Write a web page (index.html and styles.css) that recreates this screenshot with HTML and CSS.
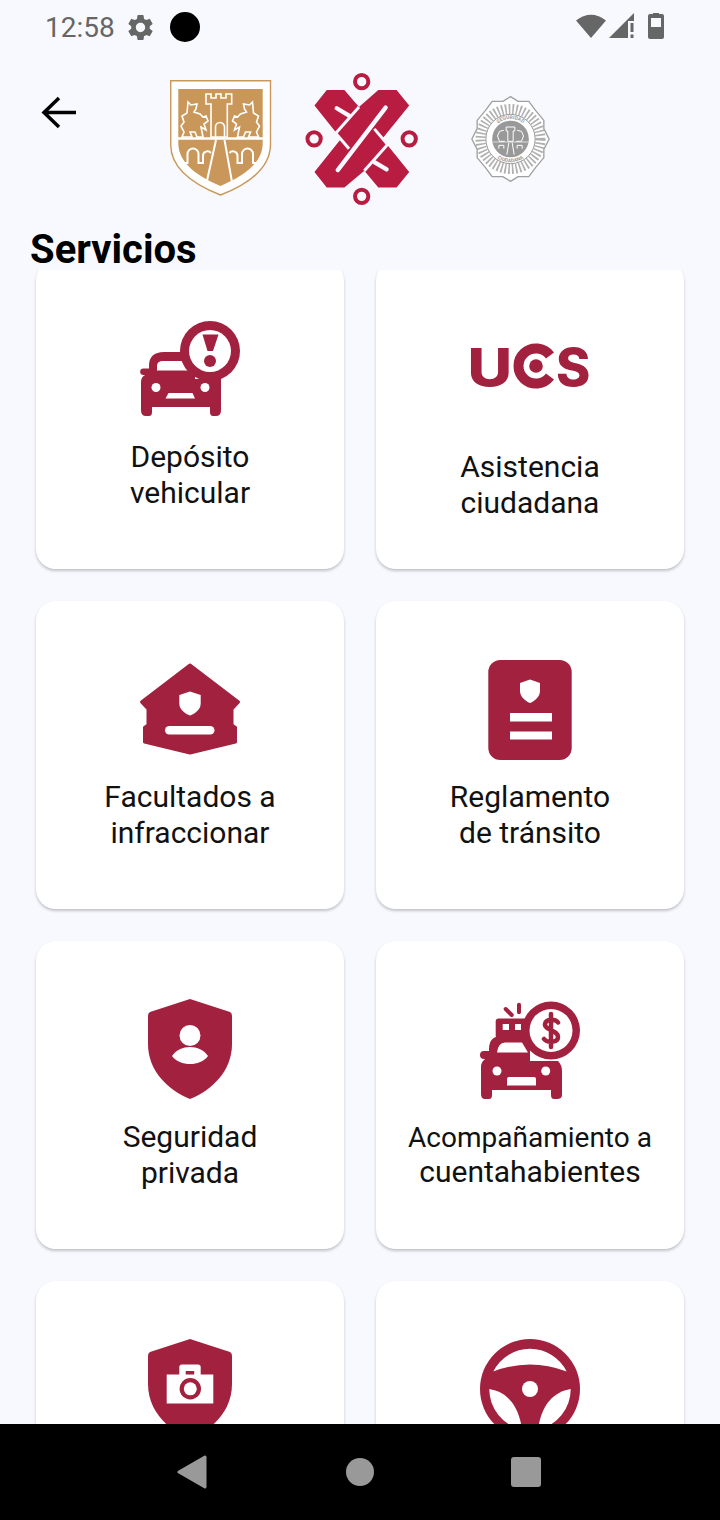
FILE: index.html
```html
<!DOCTYPE html>
<html lang="es">
<head>
  <meta charset="UTF-8">
  <meta name="viewport" content="width=device-width, initial-scale=1.0">
  <title>Servicios</title>
  <link rel="stylesheet" href="styles.css">
</head>
<body>

  <div class="status-bar">
    <span class="status-time">12:58</span>
    <svg class="status-gear" viewBox="0 0 24 24"><path d="M19.14 12.94c.04-.3.06-.61.06-.94 0-.32-.02-.64-.07-.94l2.03-1.58c.18-.14.23-.41.12-.61l-1.92-3.32c-.12-.22-.37-.29-.59-.22l-2.39.96c-.5-.38-1.03-.7-1.62-.94l-.36-2.54c-.04-.24-.24-.41-.48-.41h-3.84c-.24 0-.43.17-.47.41l-.36 2.54c-.59.24-1.13.57-1.62.94l-2.39-.96c-.22-.08-.47 0-.59.22L2.74 8.87c-.12.21-.08.47.12.61l2.03 1.58c-.05.3-.09.63-.09.94s.02.64.07.94l-2.03 1.58c-.18.14-.23.41-.12.61l1.92 3.32c.12.22.37.29.59.22l2.39-.96c.5.38 1.03.7 1.62.94l.36 2.54c.05.24.24.41.48.41h3.84c.24 0 .44-.17.47-.41l.36-2.54c.59-.24 1.13-.56 1.62-.94l2.39.96c.22.08.47 0 .59-.22l1.92-3.32c.12-.22.07-.47-.12-.61l-2.01-1.58zM12 15.6c-1.98 0-3.6-1.62-3.6-3.6s1.62-3.6 3.6-3.6 3.6 1.62 3.6 3.6-1.62 3.6-3.6 3.6z"/></svg>
    <span class="status-dot"></span>
    <svg class="status-icons" viewBox="0 0 90 30" width="90" height="30">
      <path d="M0 8.5 Q15 -3 30 8.5 L15 26Z"/>
      <path d="M33 26 L58 1 V9 H52 V26Z"/>
      <rect x="54.5" y="11" width="3" height="9"/>
      <rect x="54.5" y="22.5" width="3" height="3.5"/>
      <path fill-rule="evenodd" d="M72 4 a2 2 0 0 1 2 -2 h3 v-1 h6 v1 h3 a2 2 0 0 1 2 2 v21 a2 2 0 0 1 -2 2 h-12 a2 2 0 0 1 -2 -2z M75 6 v9 h10 v-9z"/>
    </svg>
  </div>

  <div class="header">
    <svg class="back-arrow" viewBox="0 0 36 34" width="36" height="34">
      <path d="M35 16.500 H4 M18 2 L3 16.500 L18 31" fill="none" stroke="#000" stroke-width="3.500"/>
    </svg>

    <svg class="logo-shield" viewBox="0 0 102 118" width="102" height="118">
      <path d="M.7.7 H100.500 V65 C100 90 76 105 50.500 115 C25 105 1 90 .7 65Z" fill="#fff" stroke="#c99759" stroke-width="1.400"/>
      <path d="M8.300 9 H92.700 V64 C92 84 72 97 50.500 106 C29 97 9 84 8.300 64Z" fill="#c99759"/>
      <g fill="none" stroke="#fff" stroke-width="1.600">
        <path d="M8 58.500 H93" stroke-width="2.400"/>
        <path d="M36 14 H41 V18 H46 V14 H51 V18 H56 V14 H61.700 V24 H57.300 V57 H41 V24 H36Z"/>
        <path d="M45.500 57 V47 A4.500 4.500 0 0 1 54.500 47 V57"/>
        <path d="M46 60 L36.700 102 M54.500 60 L62 102" stroke-width="2"/>
        <g id="lion-side">
          <path d="M18 22 L21 25 L27 24 L26 29 L24 32 L30 34 L33 37 L36 36 L38 41 L34 44 L36 50 L31 47 L33 57 L27 57 L25 52 L20 52 L22 57 L12 57 L14 52 L11 46 L14 42 L12 36 L17 33Z"/>
          <path d="M12 83 H17.500 V74 A5.500 5.500 0 0 1 28.500 74 V83 H33 V76 A4.500 4.500 0 0 1 41 73" stroke-width="2"/>
        </g>
        <use href="#lion-side" transform="translate(100.500 0) scale(-1 1)"/>
      </g>
    </svg>

    <svg class="logo-knot" viewBox="30 24 345 397" width="115" height="132">
      <path d="M58 122 L95 75 H148 L192 126 L250 75 H305 L343 122 L262 222 L343 322 L305 368 H250 L208 318 L148 368 H95 L58 322 L138 222Z" fill="#b81c40"/>
      <g fill="none" stroke="#f8f9ff" stroke-linecap="round">
        <path d="M125 130 L162 152" stroke-width="13"/>
        <path d="M275 314 L238 292" stroke-width="13"/>
        <path d="M192 126 L122 205" stroke-width="9" stroke-linecap="butt"/>
        <path d="M208 318 L278 239" stroke-width="9" stroke-linecap="butt"/>
        <path d="M272 128 L128 316" stroke-width="13"/>
        <path d="M122 205 L162 252" stroke-width="9" stroke-linecap="butt"/>
        <path d="M278 239 L238 192" stroke-width="9" stroke-linecap="butt"/>
      </g>
      <g fill="none" stroke="#b81c40" stroke-width="12">
        <circle cx="200" cy="50" r="20"/>
        <circle cx="200" cy="395" r="20"/>
        <circle cx="57" cy="222" r="20"/>
        <circle cx="343" cy="222" r="20"/>
      </g>
    </svg>

    <svg class="logo-badge" viewBox="527 92 236 258" width="79" height="86">
      <path d="M645 94 L668 108 L700 108 L720 135 L745 165 L745 190 L761 221 L745 252 L745 277 L720 307 L700 334 L668 334 L645 348 L622 334 L590 334 L570 307 L545 277 L545 252 L529 221 L545 190 L545 165 L570 135 L590 108 L622 108Z" fill="#fff" stroke="#a0a0a0" stroke-width="4" stroke-linejoin="round"/>
      <circle cx="645" cy="221" r="90" fill="none" stroke="#b0b0b0" stroke-width="30" stroke-dasharray="5 6"/>
      <circle cx="645" cy="221" r="74" fill="#fff" stroke="#999" stroke-width="3"/>
      <circle cx="645" cy="221" r="55" fill="#999"/>
      <defs>
        <path id="badge-top" d="M585 221 A60 60 0 0 1 705 221"/>
        <path id="badge-bottom" d="M575 221 A70 70 0 0 0 715 221"/>
      </defs>
      <text class="badge-text"><textPath href="#badge-top" startOffset="50%" text-anchor="middle">SEGURIDAD</textPath></text>
      <text class="badge-text"><textPath href="#badge-bottom" startOffset="50%" text-anchor="middle">CIUDADANA</textPath></text>
      <g fill="none" stroke="#fff" stroke-width="3">
        <path d="M632 185 H658 V197 H653 V228 H637 V197 H632Z"/>
        <path d="M625 195 L612 198 L606 212 L612 228 H628"/>
        <path d="M665 195 L678 198 L684 212 L678 228 H662"/>
        <path d="M592 230 H698" stroke-width="2"/>
        <path d="M610 250 V240 H625 V250 M665 250 V240 H680 V250 M640 232 L634 268 M650 232 L656 268"/>
      </g>
    </svg>
  </div>

  <h1 class="title">Servicios</h1>

  <div class="services">
    <div class="grid">

      <div class="card">
        <svg class="icon" viewBox="0 0 100 100">
          <path d="M9 51 V47 Q9 33 24 33 H55 V60 H81 V91 Q81 97 76 97 H73 Q70 97 70 93 V88 H12 V93 Q12 97 9 97 H6 Q1 97 1 91 V63 Q1 58 5 56 H3.500 a3.300 3.300 0 0 1 0 -6.600 H9Z"/>
          <path class="cut" d="M17 51.500 V47 Q17 42 23 42 H48 V51.500Z"/>
          <circle class="cut" cx="16" cy="68.500" r="4.500"/>
          <circle class="cut" cx="65" cy="68.500" r="4.500"/>
          <path class="cut" d="M28.500 74 H52.500 L55 79.500 H25.500Z"/>
          <circle cx="70" cy="32" r="30"/>
          <circle class="cut" cx="70" cy="32" r="21"/>
          <path d="M62.500 15.500 H78.500 L73 32 H67.500Z"/>
          <circle cx="70" cy="42" r="6"/>
        </svg>
        <span class="label">Depósito<br>vehicular</span>
      </div>

      <div class="card card-wide">
        <svg class="icon-ucs" viewBox="0 0 160 120">
          <text class="ucs-letter" transform="translate(17.500 76.500) scale(1.180 1)">U</text>
          <path class="ucs-ring" d="M100 46.500 A17.500 17.500 0 1 0 100 67.500"/>
          <circle cx="86" cy="57" r="6.800"/>
          <text class="ucs-letter" x="106" y="76.500">S</text>
        </svg>
        <span class="label">Asistencia<br>ciudadana</span>
      </div>

      <div class="card">
        <svg class="icon" viewBox="0 0 100 100">
          <path class="round" transform="translate(0 1)" d="M50 5 L98.500 42 L92 49 V65 L95.500 67.500 V82 L50 93 L4.500 82 V67.500 L8 65 V49 L1.500 42Z"/>
          <path class="cut" transform="translate(0 .5)" d="M50 32 L60.700 35.500 V44 C60.700 50 55 54 50 56 C45 54 39.300 50 39.300 44 V35.500Z"/>
          <rect class="cut" x="25" y="67" width="49.500" height="8.500" rx="4.250"/>
        </svg>
        <span class="label">Facultados a<br>infraccionar</span>
      </div>

      <div class="card">
        <svg class="icon" viewBox="0 0 100 100">
          <rect x="8.300" y="1" width="83.400" height="100" rx="12"/>
          <path class="cut" transform="translate(0 1)" d="M50 19.500 L60 23 V31 C60 36.500 55 41 50 43 C45 41 40 36.500 40 31 V23Z"/>
          <rect class="cut" x="30" y="54" width="42" height="8.500"/>
          <rect class="cut" x="30" y="72.500" width="42" height="8"/>
        </svg>
        <span class="label">Reglamento<br>de tránsito</span>
      </div>

      <div class="card">
        <svg class="icon" viewBox="0 0 100 100">
          <path d="M50 0 L90 13 Q92 14 92 17 V45 C92 72 72 91 50 100 C28 91 8 72 8 45 V17 Q8 14 10 13Z"/>
          <circle class="cut" cx="50" cy="36.500" r="10.500"/>
          <path class="cut" d="M32 57 C36 51 43 48 50 48 C57 48 64 51 68 57 C64 62.500 57 65 50 65 C43 65 36 62.500 32 57Z"/>
        </svg>
        <span class="label">Seguridad<br>privada</span>
      </div>

      <div class="card">
        <svg class="icon" viewBox="0 0 100 100">
          <path d="M25.700 10 L31.700 16 M39 5.700 V13.300" fill="none" stroke-width="4" stroke-linecap="round"/>
          <rect x="15.700" y="19.500" width="35" height="20" rx="3"/>
          <rect class="cut" x="22.700" y="25" width="6.300" height="6"/>
          <rect class="cut" x="35" y="25" width="6" height="6"/>
          <path d="M9 55 V50 Q9 37 22 37 H50 V62 H78 Q82 66 82 72 V96 Q82 100 77 100 H74 Q71 100 71 96 V91 H12 V96 Q12 100 9 100 H5 Q1 100 1 95 V68 Q1 63 5 60 H4 a4 4 0 0 1 0 -8 H9Z"/>
          <path class="cut" d="M17 53.500 Q18 44 25 43.500 H42 L48 53.500Z"/>
          <circle class="cut" cx="17" cy="72" r="4.500"/>
          <circle class="cut" cx="65.700" cy="72" r="4.500"/>
          <path class="cut" d="M27 80 Q27 78 29 78 H54 Q56 78 56 80 V86.500 H27Z"/>
          <circle cx="71" cy="31.500" r="29"/>
          <circle class="cut" cx="71" cy="31.500" r="21.500"/>
          <path class="dollar" d="M78 23.500 C76 20 66 19 65 25 C64 31 78 31 78 38 C78 44 67 44 64 40 M71 15 V48" fill="none"/>
        </svg>
        <span class="label label-small">Acompañamiento a<span class="label-line">cuentahabientes</span></span>
      </div>

      <div class="card">
        <svg class="icon" viewBox="0 0 100 100">
          <path d="M50 0 L90 13 Q92 14 92 17 V45 C92 72 72 91 50 100 C28 91 8 72 8 45 V17 Q8 14 10 13Z"/>
          <path class="cut" d="M26.700 35.500 H39.300 V28 Q39.300 25.500 42 25.500 H58 Q60.700 25.500 60.700 28 V35.500 H73.300 V64.500 H26.700Z"/>
          <rect x="45.700" y="32" width="8.500" height="3.500"/>
          <circle cx="50.300" cy="49.800" r="10.700"/>
          <circle class="cut" cx="50.300" cy="49.800" r="6.500"/>
        </svg>
      </div>

      <div class="card">
        <svg class="icon" viewBox="0 0 100 100">
          <circle cx="50" cy="50" r="50"/>
          <path class="cut" d="M13.300 32.500 A41 41 0 0 1 86.700 32.500 Q50 18.500 13.300 32.500Z"/>
          <circle class="cut" cx="50" cy="50" r="8"/>
          <path class="cut" d="M9.300 50 C28 53 39 68 42 90.500 A41 41 0 0 1 9.300 50Z"/>
          <path class="cut" d="M90.700 50 C72 53 61 68 58 90.500 A41 41 0 0 0 90.700 50Z"/>
        </svg>
      </div>

    </div>
  </div>

  <div class="nav-bar">
    <svg viewBox="0 0 30 34" width="30" height="34"><path class="nav-shape" d="M28 2 V32 L2 17Z"/></svg>
    <span class="nav-home"></span>
    <span class="nav-recent"></span>
  </div>

</body>
</html>
```

FILE: styles.css
```css
body {
  margin: 0;
  width: 720px;
  height: 1520px;
  overflow: hidden;
  display: flex;
  flex-direction: column;
  background-color: #f8f9ff;
  font-family: Roboto, sans-serif;
}

.status-bar {
  height: 54px;
  flex: none;
  display: flex;
  align-items: center;
  padding: 0 54px 0 45px;
  color: #666;
}

.status-time {
  font-size: 28px;
}

.status-gear {
  width: 31px;
  height: 31px;
  margin-left: 10px;
  fill: #666;
}

.status-dot {
  width: 30px;
  height: 30px;
  margin-left: 14px;
  border-radius: 50%;
  background-color: #000;
}

.status-icons {
  margin-left: auto;
  fill: #666;
}

.header {
  flex: none;
  height: 132px;
  padding-top: 19px;
  display: flex;
  align-items: center;
}

.back-arrow {
  align-self: flex-start;
  flex: none;
  margin: 23px 0 0 41px;
}

.logo-shield {
  flex: none;
  margin-left: 93px;
}

.logo-knot {
  flex: none;
  margin-left: 33px;
}

.logo-badge {
  flex: none;
  margin-left: 51px;
}

.badge-text {
  font-size: 15px;
  font-weight: 700;
  fill: #9a9a9a;
}

.title {
  flex: none;
  margin: 22px 0 0;
  padding-left: 30px;
  height: 43px;
  font-size: 40px;
  line-height: 45px;
  font-weight: 700;
  color: #000;
}

.services {
  flex: 1;
  min-height: 0;
  overflow: hidden;
}

.grid {
  display: grid;
  grid-template-columns: 308px 308px;
  grid-auto-rows: 308px;
  gap: 32px;
  margin-top: -9px;
  padding: 0 36px;
}

.card {
  display: flex;
  flex-direction: column;
  align-items: center;
  padding-top: 58px;
  box-sizing: border-box;
  background-color: #fff;
  border-radius: 20px;
  box-shadow: 0 2px 3px rgba(0, 0, 0, 0.22);
}

.card-wide {
  padding-top: 48px;
}

.icon,
.icon-ucs {
  flex: none;
  overflow: visible;
  fill: #a2213f;
  stroke: #a2213f;
  stroke-width: 0;
}

.icon {
  width: 100px;
  height: 100px;
}

.icon-ucs {
  width: 160px;
  height: 120px;
}

.ucs-letter {
  font-family: Inter, sans-serif;
  font-size: 52px;
  font-weight: 800;
  stroke-width: 0;
}

.ucs-ring {
  fill: none;
  stroke-width: 10;
}

.cut {
  fill: #fff;
  stroke-width: 0;
}

.round {
  stroke-width: 3;
  stroke-linejoin: round;
}

.dollar {
  stroke-width: 4.500;
  stroke-linecap: round;
}

.label {
  margin-top: 20px;
  font-size: 30px;
  line-height: 36px;
  text-align: center;
  color: #111;
}

.label-small {
  margin-top: 22px;
  font-size: 28px;
  line-height: 34px;
}

.label-line {
  display: block;
  font-size: 30px;
}

.nav-bar {
  flex: none;
  height: 96px;
  display: flex;
  align-items: center;
  background-color: #000;
  padding-left: 177px;
}

.nav-shape {
  fill: #999;
  stroke: #999;
  stroke-width: 3;
  stroke-linejoin: round;
}

.nav-home {
  width: 28px;
  height: 28px;
  margin-left: 139px;
  border-radius: 50%;
  background-color: #999;
}

.nav-recent {
  width: 30px;
  height: 30px;
  margin-left: 137px;
  border-radius: 3px;
  background-color: #999;
}
```
